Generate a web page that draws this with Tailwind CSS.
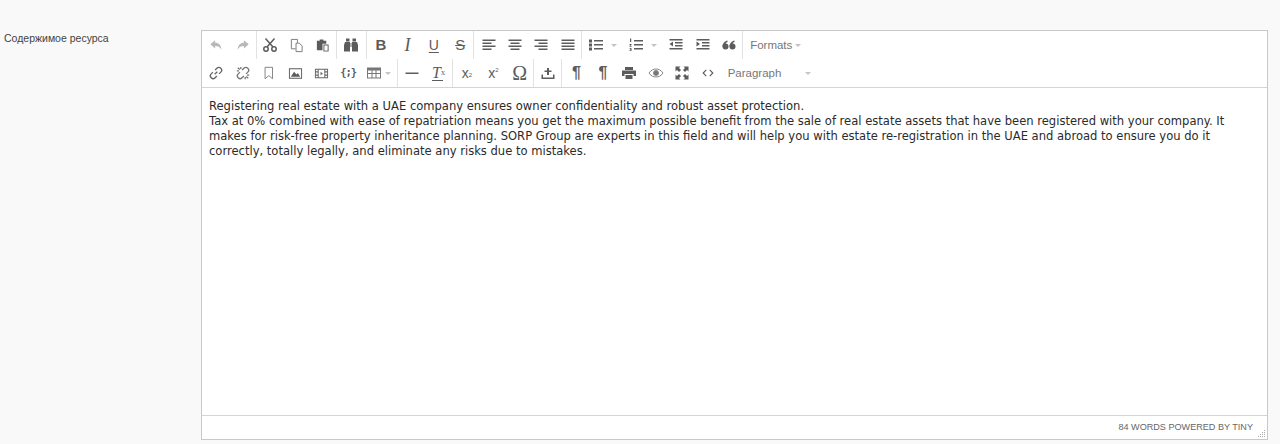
<!DOCTYPE html>
<html lang="ru">
<head>
    <meta charset="UTF-8">
    <title>Содержимое ресурса</title>
    <script src="https://cdn.jsdelivr.net/npm/@tailwindcss/browser@4"></script>
</head>
<body class="h-[444px] overflow-hidden bg-[#f9f9f9] font-['Liberation_Sans',sans-serif]">
<div class="flex pt-[30px] pl-[4px]">
    <label class="w-[197px] pt-[2px] text-[10.5px] leading-[13px] text-[#444]">Содержимое ресурса</label>

    <div class="flex h-[410px] w-[1067px] flex-col border border-[#c8c8c8] bg-white">
        <!-- toolbar -->
        <div class="h-[57px] border-b border-[#d4d4d4] text-[#5c5c5c]">
            <div class="flex h-7">
                <div class="flex pl-px text-[#b8b8b8]">
                    <span class="flex h-7 w-[26.4px] items-center justify-center"><svg class="size-[14px]" viewBox="0 0 16 16" fill="currentColor"><path d="M7 2.500v3c4 0 7 2.500 7 8-1.500-3.500-3.500-4.500-7-4.500v3L1.500 7z"/></svg></span>
                    <span class="flex h-7 w-[26.4px] items-center justify-center"><svg class="size-[14px]" viewBox="0 0 16 16" fill="currentColor"><path d="M9 2.500v3c-4 0-7 2.500-7 8 1.500-3.500 3.500-4.500 7-4.500v3L14.500 7z"/></svg></span>
                </div>
                <div class="flex border-l border-[#e2e2e2]">
                    <span class="flex h-7 w-[26.4px] items-center justify-center"><svg class="size-4" viewBox="0 0 16 16" fill="none" stroke="currentColor" stroke-width="1.500"><path d="M3.500 1.500 11 10M12.500 1.500 5 10"/><circle cx="4" cy="12" r="2.200"/><circle cx="12" cy="12" r="2.200"/></svg></span>
                    <span class="flex h-7 w-[26.4px] items-center justify-center"><svg class="size-[15px]" viewBox="0 0 16 16" fill="none" stroke="#777"><path d="M9 5V1.500H2.500v10H7M7.500 5.500H11l3 3v6H7.500z"/></svg></span>
                    <span class="flex h-7 w-[26.4px] items-center justify-center"><svg class="size-[15px]" viewBox="0 0 16 16" fill="currentColor"><path d="M2 3h3V1.500h4V3h3v3H8v7H2zM9 7h5.500v7.500H9z"/><path fill="#fff" d="M10 8h3.500v5.500H10z"/></svg></span>
                </div>
                <div class="flex border-l border-[#e2e2e2] pr-[1.500px] pl-px">
                    <span class="flex h-7 w-[26.4px] items-center justify-center"><svg class="size-4" viewBox="0 0 16 16" fill="currentColor"><path d="M3 1.500h3.500v3H3zM9.500 1.500H13v3H9.500zM2 5h5v9.500H1V8zM9 5h5l1 3v6.500H9zM7.500 6h1v4h-1z"/></svg></span>
                </div>
                <div class="flex border-l border-[#e2e2e2] pl-px">
                    <span class="flex h-7 w-[26.4px] items-center justify-center text-[15px] font-bold">B</span>
                    <span class="flex h-7 w-[26.4px] items-center justify-center font-['Liberation_Serif',serif] text-[18px] italic">I</span>
                    <span class="flex h-7 w-[26.4px] items-center justify-center text-[14px] underline underline-offset-2">U</span>
                    <span class="flex h-7 w-[26.4px] items-center justify-center text-[15px] line-through">S</span>
                </div>
                <div class="flex border-l border-[#e2e2e2] pl-px">
                    <span class="flex h-7 w-[26.4px] items-center justify-center"><svg class="size-4" viewBox="0 0 16 16" fill="currentColor"><path d="M1.500 2.500h13v1.500h-13zM1.500 5.500h9v1.500h-9zM1.500 8.500h13V10h-13zM1.500 11.500h9V13h-9z"/></svg></span>
                    <span class="flex h-7 w-[26.4px] items-center justify-center"><svg class="size-4" viewBox="0 0 16 16" fill="currentColor"><path d="M1.500 2.500h13v1.500h-13zM3.500 5.500h9v1.500h-9zM1.500 8.500h13V10h-13zM3.500 11.500h9V13h-9z"/></svg></span>
                    <span class="flex h-7 w-[26.4px] items-center justify-center"><svg class="size-4" viewBox="0 0 16 16" fill="currentColor"><path d="M1.500 2.500h13v1.500h-13zM5.500 5.500h9v1.500h-9zM1.500 8.500h13V10h-13zM5.500 11.500h9V13h-9z"/></svg></span>
                    <span class="flex h-7 w-[26.4px] items-center justify-center"><svg class="size-4" viewBox="0 0 16 16" fill="currentColor"><path d="M1.500 2.500h13v1.500h-13zM1.500 5.500h13v1.500h-13zM1.500 8.500h13V10h-13zM1.500 11.500h13V13h-13z"/></svg></span>
                </div>
                <div class="flex border-l border-[#e2e2e2] pl-px">
                    <span class="flex h-7 w-[40px] items-center gap-[7px] pl-[5.400px]"><svg class="size-4 shrink-0" viewBox="0 0 16 16" fill="currentColor"><path d="M1 2.500h3v3H1zM1 6.500h3v3H1zM1 10.500h3v3H1zM6 3h9v1.500H6zM6 7h9v1.500H6zM6 11h9v1.500H6z"/></svg><i class="size-0 border-x-[3px] border-t-[3px] border-x-transparent border-t-[#c4c4c4]"></i></span>
                    <span class="flex h-7 w-[40px] items-center gap-[7px] pl-[5.400px]"><svg class="size-4 shrink-0" viewBox="0 0 16 16" fill="currentColor"><path d="M6 3h9v1.500H6zM6 7h9v1.500H6zM6 11h9v1.500H6zM2 1.500h1.200V5H2zM1.500 7h2v1l-1 1h1v.8h-2v-.9l1-1h-1zM1.500 11h2v3h-2v-.7h1.200v-.5H2V12h.7v-.3h-1.200z"/></svg><i class="size-0 border-x-[3px] border-t-[3px] border-x-transparent border-t-[#c4c4c4]"></i></span>
                    <span class="flex h-7 w-[26.4px] items-center justify-center"><svg class="size-4" viewBox="0 0 16 16" fill="currentColor"><path d="M1.500 2h13v1.500h-13zM7 5h7.500v1.500H7zM7 8h7.500v1.500H7zM1.500 11h13v1.500h-13zM5 4.500v5L1.500 7z"/></svg></span>
                    <span class="flex h-7 w-[26.4px] items-center justify-center"><svg class="size-4" viewBox="0 0 16 16" fill="currentColor"><path d="M1.500 2h13v1.500h-13zM7 5h7.500v1.500H7zM7 8h7.500v1.500H7zM1.500 11h13v1.500h-13zM1.500 4.500v5L5 7z"/></svg></span>
                    <span class="flex h-7 w-[26.4px] items-center justify-center"><svg class="size-4" viewBox="0 0 16 16" fill="currentColor"><circle cx="4.500" cy="9.500" r="3"/><circle cx="11.500" cy="9.500" r="3"/><path d="M1.500 9.500C1.500 6 4 4 6.500 3.500V5C5 5.500 4 7 4 9zM8.500 9.500C8.500 6 11 4 13.500 3.500V5C12 5.500 11 7 11 9z"/></svg></span>
                </div>
                <div class="flex items-center gap-[3px] border-l border-[#e2e2e2] pt-px pl-[7px] text-[11.500px] text-[#777]">Formats<i class="size-0 border-x-[3px] border-t-[3px] border-x-transparent border-t-[#c4c4c4]"></i></div>
            </div>
            <div class="flex h-7">
                <div class="flex pl-px">
                    <span class="flex h-7 w-[26.4px] items-center justify-center"><svg class="size-[14px]" viewBox="0 0 16 16" fill="none" stroke="#666" stroke-width="1.500"><path d="m6.500 9.500 3-3M7 4.500l2-2a2.500 2.500 0 0 1 4.500 4.500l-2 2M9 11.500l-2 2A2.500 2.500 0 0 1 2.500 9l2-2"/></svg></span>
                    <span class="flex h-7 w-[26.4px] items-center justify-center"><svg class="size-[14px]" viewBox="0 0 16 16" fill="none" stroke="#777" stroke-width="1.500"><path d="M7 4.500l2-2a2.500 2.500 0 0 1 4.500 4.500l-2 2M9 11.500l-2 2A2.500 2.500 0 0 1 2.500 9l2-2M2 2l2.500 2M1 5.500h2.500M5.500 1v2.500M14 14l-2.500-2M15 10.500h-2.500M10.500 15v-2.500"/></svg></span>
                    <span class="flex h-7 w-[26.4px] items-center justify-center"><svg class="size-[14px]" viewBox="0 0 16 16" fill="none" stroke="#777"><path d="M3.500 1.500h8.500v13L7.750 11 3.500 14.500z"/></svg></span>
                    <span class="flex h-7 w-[26.4px] items-center justify-center"><svg class="size-[15px]" viewBox="0 0 16 16" fill="currentColor"><path fill-rule="evenodd" d="M1 2.500h14v11H1zM2 3.500v9h12v-9z"/><path d="M3 11.500 6.500 6 9 9l1.500-1.500 2.500 4z"/></svg></span>
                    <span class="flex h-7 w-[26.4px] items-center justify-center"><svg class="size-[15px]" viewBox="0 0 16 16" fill="#666"><path fill-rule="evenodd" d="M1 3h14v10H1zM5 4v8h6V4zM2 4v1.500h2V4zM2 7v2h2V7zM2 10.500V12h2v-1.500zM12 4v1.500h2V4zM12 7v2h2V7zM12 10.500V12h2v-1.500z"/><path d="M7 6l2.500 2L7 10z"/></svg></span>
                    <span class="flex h-7 w-[26.4px] items-center justify-center font-['DejaVu_Sans_Mono',monospace] text-[10.500px] font-bold tracking-[-1px]">{;}</span>
                    <span class="flex h-7 w-[35.6px] items-center gap-[3px] pl-[4.600px]"><svg class="size-4 shrink-0" viewBox="0 0 16 16" fill="#777"><path fill-rule="evenodd" d="M1 2.500h14v11H1zM2 5.500V8h3.500V5.500zM6.500 5.500V8h3V5.500zM10.500 5.500V8H14V5.500zM2 9v3.500h3.500V9zM6.500 9v3.500h3V9zM10.500 9v3.500H14V9z"/></svg><i class="size-0 border-x-[3px] border-t-[3px] border-x-transparent border-t-[#c4c4c4]"></i></span>
                </div>
                <div class="flex border-l border-[#e2e2e2] pl-px">
                    <span class="flex h-7 w-[26.4px] items-center justify-center"><svg class="size-4" viewBox="0 0 16 16" fill="currentColor"><path d="M1.500 7.500h13V9h-13z"/></svg></span>
                    <span class="relative flex h-7 w-[26.4px] items-center justify-center font-['Liberation_Serif',serif] text-[16px] italic">T<small class="text-[8px] not-italic">x</small><i class="absolute bottom-[6px] left-[7px] h-px w-[11px] bg-[#5c5c5c]"></i></span>
                </div>
                <div class="flex border-l border-[#e2e2e2] pl-px">
                    <span class="flex h-7 w-[26.4px] items-center justify-center text-[14px]">x<sub class="text-[6px]">2</sub></span>
                    <span class="flex h-7 w-[26.4px] items-center justify-center text-[14px]">x<sup class="text-[6px]">2</sup></span>
                    <span class="flex h-7 w-[26.4px] items-center justify-center font-['Liberation_Serif',serif] text-[20px]">Ω</span>
                </div>
                <div class="flex border-l border-[#e2e2e2] pl-px">
                    <span class="flex h-7 w-[26.4px] items-center justify-center"><svg class="size-4" viewBox="0 0 16 16" fill="currentColor"><path d="M1.500 9.500H3v3h10v-3h1.500V14h-13zM7 5.500H4.500V7H7v3h2V7h2.500V5.500H9V3H7z"/></svg></span>
                </div>
                <div class="flex border-l border-[#e2e2e2] pl-px">
                    <span class="flex h-7 w-[26.4px] items-center justify-center text-[16px] font-bold">¶</span>
                    <span class="flex h-7 w-[26.4px] items-center justify-center text-[16px] font-bold">¶</span>
                    <span class="flex h-7 w-[26.4px] items-center justify-center"><svg class="size-4" viewBox="0 0 16 16" fill="currentColor"><path d="M4 2h8v3H4zM1 5.500h14V11h-2.500V9h-9v2H1zM4.500 10h7v4h-7z"/></svg></span>
                    <span class="flex h-7 w-[26.4px] items-center justify-center"><svg class="size-4" viewBox="0 0 16 16" fill="none" stroke="#888"><path d="M1 8c2-3 4.500-4 7-4s5 1 7 4c-2 3-4.500 4-7 4s-5-1-7-4z"/><circle cx="8" cy="8" r="2.500" fill="#777"/></svg></span>
                    <span class="flex h-7 w-[26.4px] items-center justify-center"><svg class="size-4" viewBox="0 0 16 16" fill="currentColor"><path d="M1.500 1.500h5L5 3l2 2-2 2-2-2-1.500 1.500zM14.500 1.500v5L13 5l-2 2-2-2 2-2-1.500-1.500zM1.500 14.500v-5L3 11l2-2 2 2-2 2 1.500 1.500zM14.500 14.500h-5L11 13l-2-2 2-2 2 2 1.500-1.500z"/></svg></span>
                    <span class="flex h-7 w-[26.4px] items-center justify-center"><svg class="size-[14px]" viewBox="0 0 16 16" fill="none" stroke="currentColor" stroke-width="1.300"><path d="M6 4.500 2.500 8 6 11.500M10 4.500 13.500 8 10 11.500"/></svg></span>
                </div>
                <div class="flex w-[97px] items-center justify-between pt-px pr-[8px] pl-[6px] text-[11.500px] text-[#777]">Paragraph<i class="size-0 border-x-[3px] border-t-[3px] border-x-transparent border-t-[#c4c4c4]"></i></div>
            </div>
        </div>

        <!-- content -->
        <div class="flex-1 px-[7px] pt-[11px] font-['DejaVu_Sans',sans-serif] text-[11.550px] leading-[15px] text-[#2b2b2b]">
            <p>Registering real estate with a UAE company ensures owner confidentiality and robust asset protection.</p>
            <p>Tax at 0% combined with ease of repatriation means you get the maximum possible benefit from the sale of real estate assets that have been registered with your company. It makes for risk-free property inheritance planning. SORP Group are experts in this field and will help you with estate re-registration in the UAE and abroad to ensure you do it correctly, totally legally, and eliminate any risks due to mistakes.</p>
        </div>

        <!-- status bar -->
        <div class="relative flex h-6 items-center justify-end border-t border-[#d4d4d4] pr-[14px] text-[9.100px] text-[#666]">84 WORDS POWERED BY TINY
            <svg class="absolute right-[1px] bottom-[1px] size-[9px]" viewBox="0 0 9 9" fill="#aaa"><path d="M7 1h1v1H7zM5 3h1v1H5zM7 3h1v1H7zM3 5h1v1H3zM5 5h1v1H5zM7 5h1v1H7zM1 7h1v1H1zM3 7h1v1H3zM5 7h1v1H5zM7 7h1v1H7z"/></svg>
        </div>
    </div>
</div>
</body>
</html>
